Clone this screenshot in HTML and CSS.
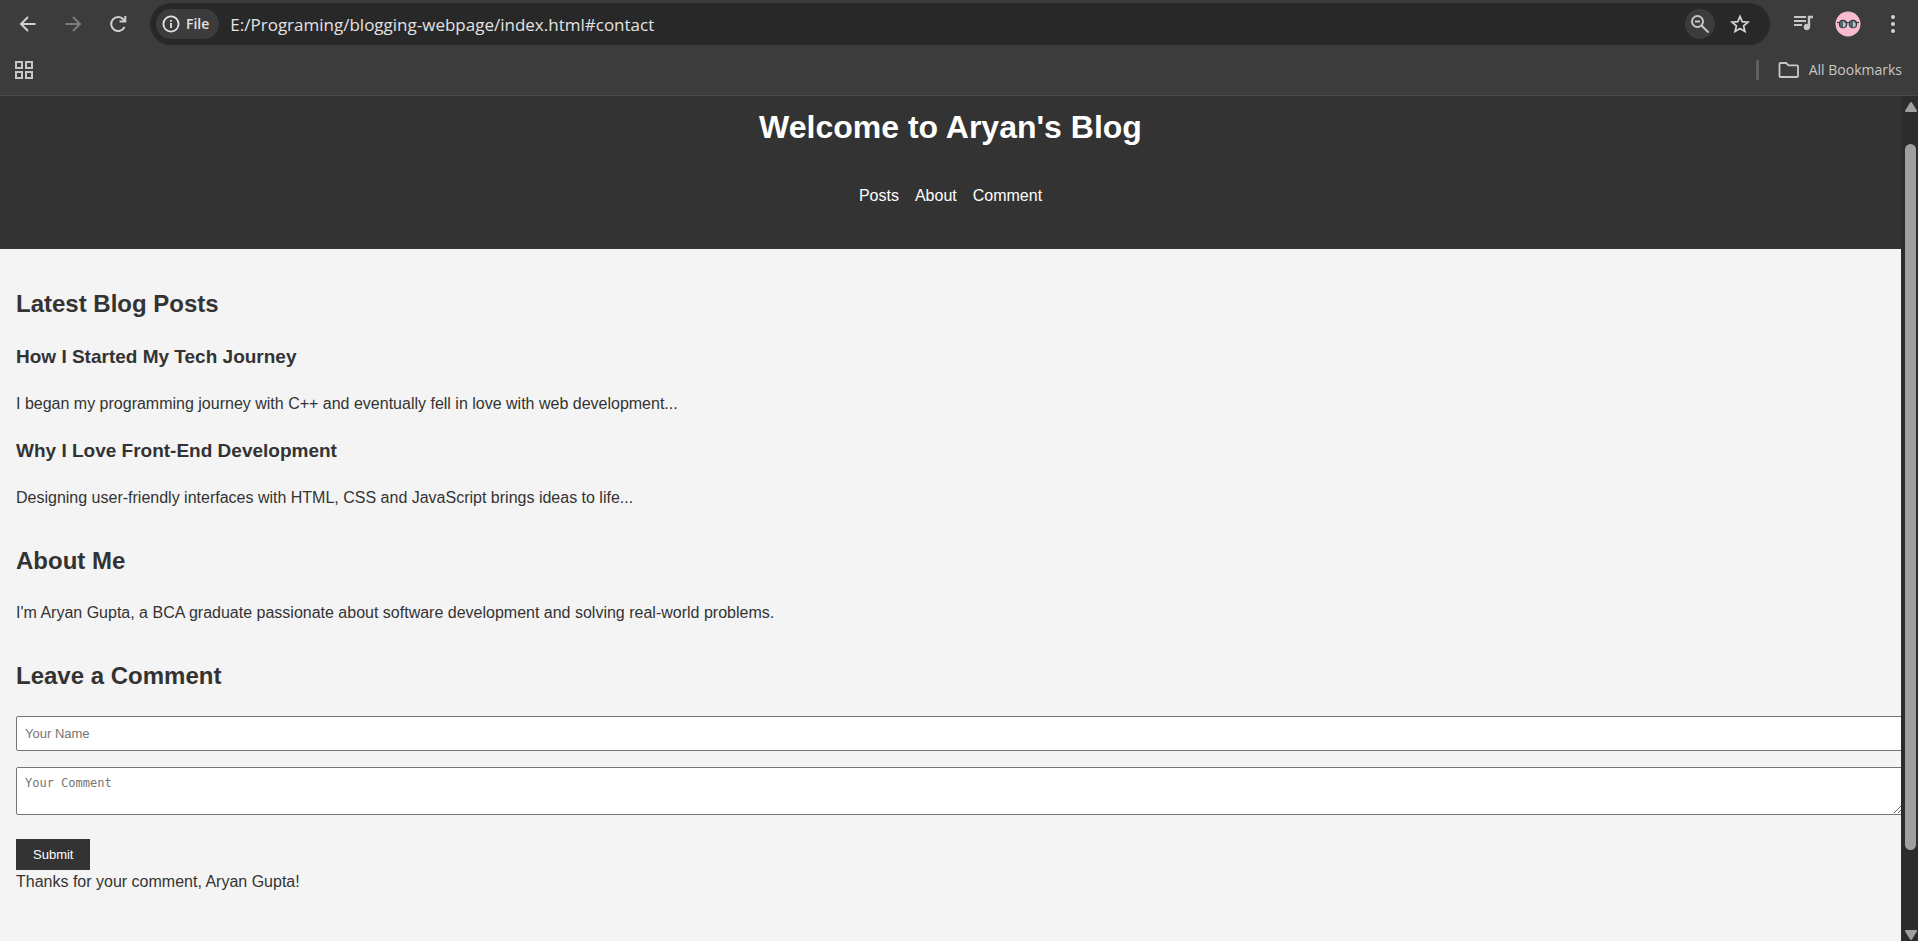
FILE: index.html
```html
<!DOCTYPE html>
<html lang="en">
<head>
<meta charset="utf-8">
<title>Aryan's Blog</title>
<link rel="stylesheet" href="styles.css">
</head>
<body>
<div class="toolbar">
  <div class="nav-buttons">
    <button class="icon-button" aria-label="Back"><svg width="24" height="24" viewBox="0 0 24 24" fill="none" stroke="#d0d0d0" stroke-width="2"><path d="M19.500 12H6M12 5l-7 7 7 7"/></svg></button>
    <button class="icon-button" aria-label="Forward"><svg width="24" height="24" viewBox="0 0 24 24" fill="none" stroke="#7d7d7d" stroke-width="2"><path d="M4.500 12H18M12 5l7 7-7 7"/></svg></button>
    <button class="icon-button" aria-label="Reload"><svg width="24" height="24" viewBox="0 0 24 24" fill="none" stroke="#d0d0d0" stroke-width="2"><path d="M18.500 15A7 7 0 1 1 17.500 7.500L19 9M19.300 4v5.600H13.500"/></svg></button>
  </div>
  <div class="address-bar">
    <button class="site-chip"><svg width="18" height="18" viewBox="0 0 18 18" fill="none" stroke="#e3e3e3" stroke-width="1.800"><circle cx="9" cy="9" r="7.600"/><path d="M9 8v5M9 5v1.800"/></svg>File</button>
    <input class="url" type="text" aria-label="Address" value="E:/Programing/blogging-webpage/index.html#contact">
    <button class="round-button" aria-label="Zoom"><svg width="20" height="20" viewBox="0 0 20 20" fill="none" stroke="#c7c7c7" stroke-width="2"><circle cx="7.500" cy="7.500" r="5.500"/><path d="M5 7.500h5M11.500 11.500l7 7"/></svg></button>
    <button class="icon-button" aria-label="Bookmark this page"><svg width="24" height="24" viewBox="0 0 24 24" fill="none" stroke="#d0d0d0" stroke-width="1.800"><path d="M12 4.500l2.200 5.200 5.700.5-4.300 3.700 1.300 5.500-4.900-2.900-4.900 2.900 1.300-5.500-4.300-3.700 5.700-.5z"/></svg></button>
  </div>
  <div class="tool-icons">
    <button class="icon-button" aria-label="Media controls"><svg width="24" height="24" viewBox="0 0 24 24" fill="none" stroke="#c7c7c7" stroke-width="2"><path d="M3 5h12M3 9h12M3 13h8"/><path d="M22 5h-4v10" stroke-width="2.400"/><circle cx="15.800" cy="15" r="2.800" fill="#c7c7c7" stroke-width="1"/></svg></button>
    <button class="icon-button" aria-label="Profile"><svg width="26" height="26" viewBox="0 0 26 26"><circle cx="13" cy="13" r="12.500" fill="#f8bbd0"/><g fill="#56666b" stroke="#33383a" stroke-width="1"><circle cx="8" cy="13" r="3.900"/><circle cx="18" cy="13" r="3.900"/><path d="M2 11.500h3M11.500 12q1.500-1.500 3 0M21 11.500h3" fill="none"/></g><path d="M8 10v6.500a3.300 3.300 0 0 0 2.500-4zM18 10v6.500a3.300 3.300 0 0 0 2.500-4z" fill="#b5c5c8"/></svg></button>
    <button class="icon-button" aria-label="Menu"><svg width="24" height="24" viewBox="0 0 24 24" fill="#d0d0d0"><circle cx="12" cy="5" r="2"/><circle cx="12" cy="12" r="2"/><circle cx="12" cy="19" r="2"/></svg></button>
  </div>
</div>
<div class="bookmarks">
  <button class="icon-button" aria-label="Apps"><svg width="20" height="20" viewBox="0 0 20 20" fill="none" stroke="#c7c7c7" stroke-width="2"><path d="M2 2h6v6H2zM12 2h6v6h-6zM2 12h6v6H2zM12 12h6v6h-6z"/></svg></button>
  <button class="all-bookmarks"><svg width="22" height="18" viewBox="0 0 22 18" fill="none" stroke="#c7c7c7" stroke-width="1.800"><path d="M2.500 2h5.700l2.300 2.300h8.500a1 1 0 0 1 1 1V15a1 1 0 0 1-1 1H2.500a1 1 0 0 1-1-1V3a1 1 0 0 1 1-1z"/></svg>All Bookmarks</button>
</div>
<div class="viewport">
  <div class="page">
    <header class="site-header">
      <h1>Welcome to Aryan's Blog</h1>
      <nav class="site-nav"><a href="#posts">Posts</a><a href="#about">About</a><a href="#contact">Comment</a></nav>
    </header>
    <main class="content">
      <section id="posts" class="section">
        <h2>Latest Blog Posts</h2>
        <article><h3>How I Started My Tech Journey</h3><p>I began my programming journey with C++ and eventually fell in love with web development...</p></article>
        <article><h3>Why I Love Front-End Development</h3><p>Designing user-friendly interfaces with HTML, CSS and JavaScript brings ideas to life...</p></article>
      </section>
      <section id="about" class="section">
        <h2>About Me</h2>
        <p>I'm Aryan Gupta, a BCA graduate passionate about software development and solving real-world problems.</p>
      </section>
      <section id="contact" class="section">
        <h2>Leave a Comment</h2>
        <form class="comment-form">
          <input class="field" type="text" aria-label="Your Name" placeholder="Your Name">
          <textarea class="field message" rows="2" aria-label="Your Comment" placeholder="Your Comment"></textarea>
          <button class="submit" type="button">Submit</button>
        </form>
        <div class="response">Thanks for your comment, Aryan Gupta!</div>
      </section>
    </main>
  </div>
  <div class="scrollbar" aria-hidden="true">
    <svg width="12" height="10" viewBox="0 0 12 10"><path d="M6 1l5 8H1z" fill="#9f9f9f" stroke="#9f9f9f" stroke-width="2" stroke-linejoin="round"/></svg>
    <div class="track"><div class="thumb"></div></div>
    <svg width="12" height="10" viewBox="0 0 12 10"><path d="M6 9L1 1h10z" fill="#9f9f9f" stroke="#9f9f9f" stroke-width="2" stroke-linejoin="round"/></svg>
  </div>
</div>
</body>
</html>
```

FILE: styles.css
```css
* { box-sizing: border-box; }
body {
  margin: 0;
  height: 100vh;
  display: flex;
  flex-direction: column;
  overflow: hidden;
  background: #3c3c3c;
  color: #333;
  font-family: "Liberation Sans", Arial, sans-serif;
  font-size: 16px;
  line-height: 24px;
}
button { border: 0; padding: 0; background: none; font: inherit; color: inherit; }
svg { display: block; flex: none; }
h1, h2, h3, p { margin: 0; }

.toolbar {
  display: flex;
  align-items: center;
  padding: 3px 13px 0 16px;
  font-family: "Open Sans", "Noto Sans", sans-serif;
}
.nav-buttons { display: flex; gap: 21px; margin-right: 20px; }
.address-bar {
  flex: 1;
  min-width: 0;
  height: 42px;
  display: flex;
  align-items: center;
  padding: 0 18px 0 6px;
  border-radius: 21px;
  background: #282828;
}
.site-chip {
  display: flex;
  align-items: center;
  gap: 6px;
  height: 30px;
  padding: 0 10px 0 6px;
  border-radius: 15px;
  background: #3c3c3c;
  color: #e3e3e3;
  font-size: 14px;
  font-weight: 600;
}
.url {
  flex: 1;
  min-width: 0;
  padding: 0 0 0 11px;
  border: 0;
  background: none;
  color: #e3e3e3;
  font-family: "Open Sans", "Noto Sans", sans-serif;
  font-size: 17px;
}
.round-button {
  display: grid;
  place-items: center;
  width: 30px;
  height: 30px;
  margin-right: 13px;
  border-radius: 50%;
  background: #3c3c3c;
}
.tool-icons { display: flex; align-items: center; gap: 20px; margin-left: 21px; }

.bookmarks {
  display: flex;
  align-items: center;
  justify-content: space-between;
  height: 51px;
  padding: 0 16px 0 14px;
  border-bottom: 1px solid #4a4a4a;
}
.all-bookmarks {
  display: flex;
  align-items: center;
  gap: 9px;
  height: 20px;
  padding-left: 19px;
  border-left: 3px solid #5e5e5e;
  color: #c7c7c7;
  font-family: "Open Sans", "Noto Sans", sans-serif;
  font-size: 14px;
}

.viewport { flex: 1; min-height: 0; display: flex; }
.page { flex: 1; min-width: 0; overflow: hidden; background: #f4f4f4; }
.site-header {
  padding: 12px 16px 41px;
  background: #333;
  color: #fff;
  text-align: center;
}
h1 { font-size: 32px; line-height: 38px; }
.site-nav { display: flex; justify-content: center; gap: 16px; margin-top: 38px; }
.site-nav a { color: #fff; text-decoration: none; }

.content { display: flex; flex-direction: column; gap: 35px; padding: 39px 16px; }
h2 { font-size: 24px; line-height: 32px; margin-bottom: 24px; }
h3 { font-size: 19px; line-height: 26px; margin-bottom: 22px; }
article + article { margin-top: 22px; }

.comment-form { display: flex; flex-direction: column; align-items: flex-start; }
.field {
  box-sizing: content-box;
  width: 100%;
  margin: 0 0 16px;
  padding: 8px;
  border: 1px solid #767676;
  border-radius: 2px;
  background: #fff;
  font-family: "Liberation Sans", Arial, sans-serif;
  font-size: 13px;
  line-height: 17px;
}
.field::placeholder { color: #757575; }
.message {
  margin-bottom: 24px;
  font-family: "DejaVu Sans Mono", monospace;
  font-size: 12px;
  line-height: 15px;
}
.submit {
  padding: 8px 17px;
  background: #333;
  color: #fff;
  font-size: 13px;
  line-height: 15px;
}

.scrollbar {
  display: flex;
  flex-direction: column;
  align-items: center;
  width: 17px;
  padding: 6px 0 1px 2px;
  background: #2c2c2c;
}
.track { flex: 1; padding: 32px 0 80px; }
.thumb { width: 11px; height: 100%; border-radius: 6px; background: #9f9f9f; }
```
